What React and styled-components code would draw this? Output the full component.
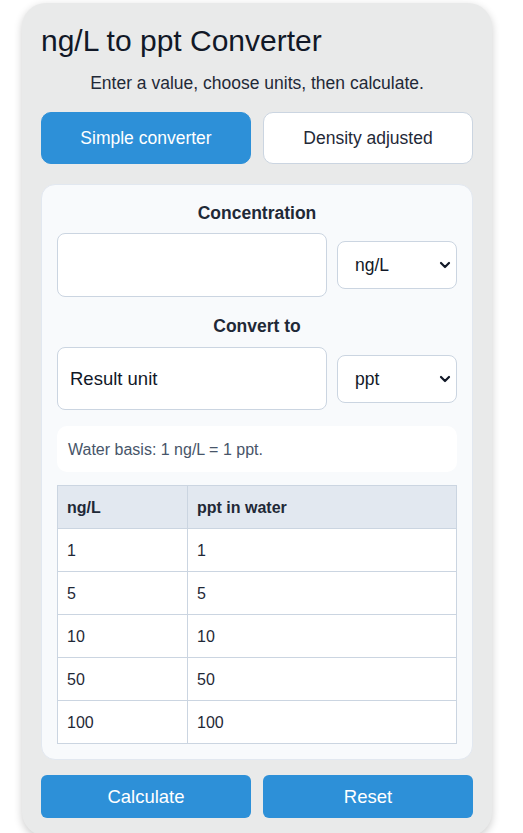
import React, { useState } from "react";
import styled, { createGlobalStyle } from "styled-components";

const Global = createGlobalStyle`
  html, body { margin: 0; padding: 0; background: #ffffff; }
  body { font-family: "Liberation Sans", Arial, sans-serif; color: #1f2937; }
  * { box-sizing: border-box; }
`;

const Card = styled.div`
  width: 470px;
  margin: 3px 0 0 22px;
  background: #e9eaea;
  border-radius: 24px;
  padding: 20px 19px 18px;
  box-shadow: 0 3px 8px rgba(0, 0, 0, 0.2);
  display: flex;
  flex-direction: column;
`;

const Title = styled.h1`
  margin: 0 0 14px;
  font-size: 30px;
  line-height: 36px;
  font-weight: 400;
  color: #111827;
`;

const Subtitle = styled.p`
  margin: 0 0 19px;
  font-size: 17.5px;
  line-height: 20px;
  text-align: center;
  color: #1f2937;
`;

const Tabs = styled.div`
  display: grid;
  grid-template-columns: 1fr 1fr;
  gap: 12px;
  margin-bottom: 20px;
`;

const Tab = styled.button`
  height: 52px;
  border-radius: 10px;
  font-family: inherit;
  font-size: 17.5px;
  cursor: pointer;
  border: 1px solid ${(p) => (p.$active ? "#2d90d8" : "#cbd5e1")};
  background: ${(p) => (p.$active ? "#2d90d8" : "#ffffff")};
  color: ${(p) => (p.$active ? "#ffffff" : "#1f2937")};
`;

const Panel = styled.div`
  background: #f8fafc;
  border: 1px solid #e2e8f0;
  border-radius: 14px;
  padding: 18px 15px 15px;
  display: flex;
  flex-direction: column;
`;

const Label = styled.div`
  font-size: 17.5px;
  line-height: 20px;
  font-weight: 700;
  text-align: center;
  color: #1f2937;
  margin-top: ${(p) => p.$top || 0}px;
  margin-bottom: ${(p) => p.$bottom || 10}px;
`;

const FieldRow = styled.div`
  display: flex;
  align-items: center;
  gap: 10px;
`;

const TextInput = styled.input`
  width: 270px;
  height: ${(p) => p.$h || 64}px;
  border: 1px solid #cbd5e1;
  border-radius: 8px;
  background: #ffffff;
  padding: 0 12px;
  font-family: inherit;
  font-size: 18.5px;
  color: #111827;
  outline: none;
  &::placeholder { color: #111827; opacity: 1; }
`;

const SelectWrap = styled.div`
  position: relative;
  width: 120px;
  height: 48px;
`;

const Select = styled.select`
  appearance: none;
  -webkit-appearance: none;
  width: 100%;
  height: 100%;
  border: 1px solid #cbd5e1;
  border-radius: 8px;
  background: #ffffff;
  padding: 0 28px 0 17px;
  font-family: inherit;
  font-size: 17.5px;
  color: #111827;
  outline: none;
`;

const Chevron = styled.svg`
  position: absolute;
  right: 5px;
  top: 50%;
  transform: translateY(-50%);
  pointer-events: none;
`;

const Info = styled.div`
  margin-top: 16px;
  height: 46px;
  background: #ffffff;
  border-radius: 10px;
  padding: 2px 11px 0;
  display: flex;
  align-items: center;
  font-size: 16px;
  color: #475569;
`;

const Table = styled.table`
  margin-top: 13px;
  width: 100%;
  border-collapse: collapse;
  background: #ffffff;
  font-size: 16px;
  color: #1f2937;
`;

const Th = styled.th`
  height: 43px;
  background: #e2e8f0;
  border: 1px solid #cbd5e1;
  text-align: left;
  padding: 2px 9px 0;
  font-weight: 700;
  width: ${(p) => p.$w || "auto"};
`;

const Td = styled.td`
  height: 43px;
  border: 1px solid #cbd5e1;
  padding: 2px 9px 0;
`;

const Actions = styled.div`
  display: grid;
  grid-template-columns: 1fr 1fr;
  gap: 12px;
  margin-top: 15px;
`;

const ActionButton = styled.button`
  height: 43px;
  border: none;
  border-radius: 6px;
  background: #2d90d8;
  color: #ffffff;
  font-family: inherit;
  font-size: 18.5px;
  padding-top: 2px;
  cursor: pointer;
`;

const ChevronIcon = () => (
  <Chevron width="14" height="10" viewBox="0 0 14 10">
    <polyline points="3,3 7,7 11,3" fill="none" stroke="#111827" strokeWidth="2.2" strokeLinecap="round" strokeLinejoin="round" />
  </Chevron>
);

const rows = [1, 5, 10, 50, 100];

export default function App() {
  const [mode, setMode] = useState("simple");
  return (
    <>
      <Global />
      <Card>
        <Title>ng/L to ppt Converter</Title>
        <Subtitle>Enter a value, choose units, then calculate.</Subtitle>
        <Tabs>
          <Tab $active={mode === "simple"} onClick={() => setMode("simple")}>Simple converter</Tab>
          <Tab $active={mode === "density"} onClick={() => setMode("density")}>Density adjusted</Tab>
        </Tabs>
        <Panel>
          <Label>Concentration</Label>
          <FieldRow>
            <TextInput type="text" $h={64} />
            <SelectWrap>
              <Select defaultValue="ng/L">
                <option>ng/L</option>
                <option>µg/L</option>
                <option>mg/L</option>
              </Select>
              <ChevronIcon />
            </SelectWrap>
          </FieldRow>
          <Label $top={19} $bottom={11}>Convert to</Label>
          <FieldRow>
            <TextInput type="text" readOnly placeholder="Result unit" $h={63} />
            <SelectWrap>
              <Select defaultValue="ppt">
                <option>ppt</option>
                <option>ppb</option>
                <option>ppm</option>
              </Select>
              <ChevronIcon />
            </SelectWrap>
          </FieldRow>
          <Info>Water basis: 1 ng/L = 1 ppt.</Info>
          <Table>
            <thead>
              <tr>
                <Th $w="130px">ng/L</Th>
                <Th>ppt in water</Th>
              </tr>
            </thead>
            <tbody>
              {rows.map((r) => (
                <tr key={r}>
                  <Td>{r}</Td>
                  <Td>{r}</Td>
                </tr>
              ))}
            </tbody>
          </Table>
        </Panel>
        <Actions>
          <ActionButton>Calculate</ActionButton>
          <ActionButton>Reset</ActionButton>
        </Actions>
      </Card>
    </>
  );
}
